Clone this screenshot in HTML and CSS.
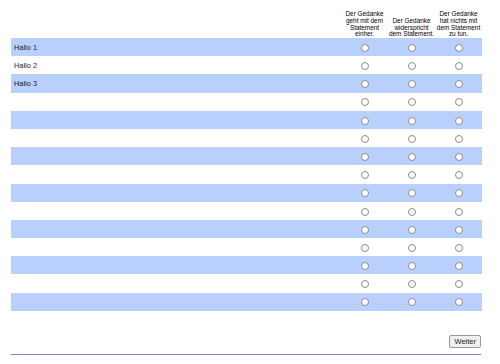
FILE: index.html
```html
<!DOCTYPE html>
<html>
<head>
<meta charset="utf-8">
<link rel="stylesheet" href="styles.css">
</head>
<body>
<div class="page">
  <table class="grid">
    <thead>
      <tr>
        <th class="label-col"></th>
        <th class="opt">Der Gedanke geht mit dem Statement einher.</th>
        <th class="opt">Der Gedanke widerspricht dem Statement.</th>
        <th class="opt">Der Gedanke hat nichts mit dem Statement zu tun.</th>
      </tr>
    </thead>
    <tbody>
      <tr class="odd"><td class="label">Hallo 1</td><td><input type="radio" name="r1"></td><td><input type="radio" name="r1"></td><td><input type="radio" name="r1"></td></tr>
      <tr><td class="label">Hallo 2</td><td><input type="radio" name="r2"></td><td><input type="radio" name="r2"></td><td><input type="radio" name="r2"></td></tr>
      <tr class="odd"><td class="label">Hallo 3</td><td><input type="radio" name="r3"></td><td><input type="radio" name="r3"></td><td><input type="radio" name="r3"></td></tr>
      <tr><td class="label"></td><td><input type="radio" name="r4"></td><td><input type="radio" name="r4"></td><td><input type="radio" name="r4"></td></tr>
      <tr class="odd"><td class="label"></td><td><input type="radio" name="r5"></td><td><input type="radio" name="r5"></td><td><input type="radio" name="r5"></td></tr>
      <tr><td class="label"></td><td><input type="radio" name="r6"></td><td><input type="radio" name="r6"></td><td><input type="radio" name="r6"></td></tr>
      <tr class="odd"><td class="label"></td><td><input type="radio" name="r7"></td><td><input type="radio" name="r7"></td><td><input type="radio" name="r7"></td></tr>
      <tr><td class="label"></td><td><input type="radio" name="r8"></td><td><input type="radio" name="r8"></td><td><input type="radio" name="r8"></td></tr>
      <tr class="odd"><td class="label"></td><td><input type="radio" name="r9"></td><td><input type="radio" name="r9"></td><td><input type="radio" name="r9"></td></tr>
      <tr><td class="label"></td><td><input type="radio" name="r10"></td><td><input type="radio" name="r10"></td><td><input type="radio" name="r10"></td></tr>
      <tr class="odd"><td class="label"></td><td><input type="radio" name="r11"></td><td><input type="radio" name="r11"></td><td><input type="radio" name="r11"></td></tr>
      <tr><td class="label"></td><td><input type="radio" name="r12"></td><td><input type="radio" name="r12"></td><td><input type="radio" name="r12"></td></tr>
      <tr class="odd"><td class="label"></td><td><input type="radio" name="r13"></td><td><input type="radio" name="r13"></td><td><input type="radio" name="r13"></td></tr>
      <tr><td class="label"></td><td><input type="radio" name="r14"></td><td><input type="radio" name="r14"></td><td><input type="radio" name="r14"></td></tr>
      <tr class="odd"><td class="label"></td><td><input type="radio" name="r15"></td><td><input type="radio" name="r15"></td><td><input type="radio" name="r15"></td></tr>
    </tbody>
  </table>
  <div class="actions">
    <button class="next" type="button">Weiter</button>
  </div>
  <div class="rule"></div>
</div>
</body>
</html>
```

FILE: styles.css
```css
html, body {
  margin: 0;
  padding: 0;
  background: #ffffff;
}
body {
  font-family: "Liberation Sans", Arial, sans-serif;
  color: #1a1a1a;
}
.page {
  width: 470px;
  margin-left: 11px;
}
.grid {
  width: 470px;
  border-collapse: collapse;
  border-spacing: 0;
  table-layout: fixed;
}
.grid th {
  padding: 0;
  box-sizing: border-box;
}
.label-col {
  width: 330px;
}
.opt {
  width: 47px;
  height: 38px;
  padding: 0 0 1px 0;
  font-size: 6.4px;
  line-height: 6.7px;
  font-weight: normal;
  text-align: center;
  vertical-align: bottom;
  color: #000;
}
.grid td {
  height: 18.2px;
  padding: 0;
  text-align: center;
  vertical-align: middle;
}
.grid td.label {
  text-align: left;
  padding-left: 3px;
  font-size: 7.4px;
  color: #1a1a1a;
}
.grid tr.odd td {
  background: #b9d0fc;
}
.grid input[type="radio"] {
  appearance: none;
  -webkit-appearance: none;
  width: 8px;
  height: 8px;
  margin: 0;
  padding: 0;
  border: 1px solid #8c8c8c;
  border-radius: 50%;
  background: #fff;
  box-sizing: border-box;
  display: inline-block;
  vertical-align: middle;
}
.actions {
  display: flex;
  justify-content: flex-end;
  padding-top: 24px;
}
.next {
  font-family: "Liberation Sans", Arial, sans-serif;
  font-size: 7.5px;
  color: #222;
  background: #efefef;
  border: 1px solid #9a9a9a;
  border-radius: 2px;
  padding: 0 4px;
  height: 13px;
  line-height: 11px;
  margin: 0;
}
.rule {
  margin-top: 6px;
  height: 1px;
  background: #7d88bf;
}
```
